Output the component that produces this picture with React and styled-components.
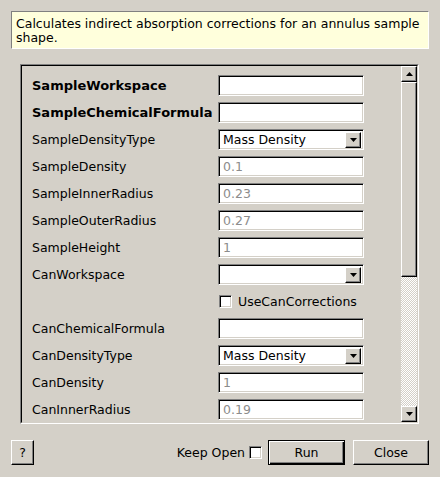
import React from "react";
import styled, { createGlobalStyle, css } from "styled-components";

const Global = createGlobalStyle`
  html, body { margin: 0; padding: 0; }
  body {
    background: #d4d0c8;
    font-family: "DejaVu Sans", "Liberation Sans", sans-serif;
    font-size: 12.5px;
    color: #000;
  }
`;

const Dialog = styled.div`
  width: 440px;
  height: 477px;
  box-sizing: border-box;
  padding: 11px 11px 0 11px;
  display: flex;
  flex-direction: column;
  overflow: hidden;
`;

const Description = styled.div`
  box-sizing: border-box;
  height: 38px;
  background: #ffffdc;
  border: 1px solid;
  border-color: #808080 #ffffff #ffffff #808080;
  padding: 5px 3px 0 4px;
  line-height: 14px;
`;

const Frame = styled.div`
  margin: 15px 10px 0 9px;
  height: 360px;
  box-sizing: border-box;
  border: 1px solid;
  border-color: #808080 #ffffff #ffffff #808080;
  display: flex;
`;

const FrameInner = styled.div`
  flex: 1;
  display: flex;
  border: 1px solid;
  border-color: #000 #d4d0c8 #d4d0c8 #000;
  min-height: 0;
`;

const Content = styled.div`
  flex: 1;
  overflow: hidden;
  padding: 6px 0 0 10px;
`;

const Row = styled.div`
  height: 27px;
  display: grid;
  grid-template-columns: 186px 146px;
  align-items: center;
`;

const Label = styled.div`
  font-weight: ${(p) => (p.$bold ? "bold" : "normal")};
  font-size: ${(p) => (p.$bold ? "13px" : "12.5px")};
  white-space: nowrap;
`;

const sunken = css`
  box-sizing: border-box;
  border: 1px solid;
  border-color: #808080 #ffffff #ffffff #808080;
  box-shadow: inset 1px 1px 0 #000, inset -1px -1px 0 #d4d0c8;
  background: #fff;
`;

const Field = styled.div`
  ${sunken}
  height: 21px;
  padding: 0 4px;
  display: flex;
  align-items: center;
  color: ${(p) => (p.$dim ? "#8c8c8c" : "#000")};
`;

const ComboBox = styled.div`
  ${sunken}
  height: 21px;
  display: flex;
  align-items: center;
  padding: 2px 2px 2px 4px;
`;

const ComboText = styled.div`
  flex: 1;
`;

const raised = css`
  box-sizing: border-box;
  background: #d4d0c8;
  border: 1px solid;
  border-color: #ffffff #000 #000 #ffffff;
  box-shadow: inset -1px -1px 0 #808080;
`;

const ArrowButton = styled.div`
  ${raised}
  width: 16px;
  height: 16px;
  display: flex;
  align-items: center;
  justify-content: center;
  flex: none;
`;

const Arrow = ({ up }) => (
  <svg width="7" height="4" viewBox="0 0 7 4">
    <path d={up ? "M3.5 0 L7 4 L0 4 Z" : "M0 0 L7 0 L3.5 4 Z"} fill="#000" />
  </svg>
);

const CheckRow = styled.div`
  height: 27px;
  display: flex;
  align-items: center;
  padding-left: 187px;
  gap: 6px;
`;

const CheckBox = styled.div`
  ${sunken}
  width: 13px;
  height: 13px;
  flex: none;
`;

const ScrollBar = styled.div`
  width: 16px;
  display: flex;
  flex-direction: column;
`;

const Thumb = styled.div`
  ${raised}
  height: 195px;
  flex: none;
`;

const Trough = styled.div`
  flex: 1;
  background-color: #ffffff;
  background-image: conic-gradient(#d4d0c8 25%, transparent 25% 50%, #d4d0c8 50% 75%, transparent 75%);
  background-size: 2px 2px;
`;

const Footer = styled.div`
  display: flex;
  align-items: center;
  margin-top: 16px;
  height: 25px;
`;

const Button = styled.div`
  ${raised}
  height: 25px;
  width: ${(p) => p.$w}px;
  display: flex;
  align-items: center;
  justify-content: center;
  ${(p) =>
    p.$default &&
    css`
      border: 1px solid #000;
      box-shadow: inset 1px 1px 0 #fff, inset -1px -1px 0 #000, inset -2px -2px 0 #808080;
    `}
`;

const Spacer = styled.div`
  flex: 1;
`;

const KeepOpen = styled.div`
  display: flex;
  align-items: center;
  gap: 4px;
  margin-right: 6px;
`;

const Gap = styled.div`
  width: ${(p) => p.$w}px;
`;

const rows = [
  { label: "SampleWorkspace", bold: true, kind: "field" },
  { label: "SampleChemicalFormula", bold: true, kind: "field" },
  { label: "SampleDensityType", kind: "combo", value: "Mass Density" },
  { label: "SampleDensity", kind: "field", value: "0.1", dim: true },
  { label: "SampleInnerRadius", kind: "field", value: "0.23", dim: true },
  { label: "SampleOuterRadius", kind: "field", value: "0.27", dim: true },
  { label: "SampleHeight", kind: "field", value: "1", dim: true },
  { label: "CanWorkspace", kind: "combo", value: "" },
  { kind: "check", label: "UseCanCorrections" },
  { label: "CanChemicalFormula", kind: "field" },
  { label: "CanDensityType", kind: "combo", value: "Mass Density" },
  { label: "CanDensity", kind: "field", value: "1", dim: true },
  { label: "CanInnerRadius", kind: "field", value: "0.19", dim: true },
];

export default function App() {
  return (
    <>
      <Global />
      <Dialog>
        <Description>
          Calculates indirect absorption corrections for an annulus sample shape.
        </Description>
        <Frame>
          <FrameInner>
            <Content>
              {rows.map((r, i) =>
                r.kind === "check" ? (
                  <CheckRow key={i}>
                    <CheckBox />
                    <span>{r.label}</span>
                  </CheckRow>
                ) : (
                  <Row key={i}>
                    <Label $bold={r.bold}>{r.label}</Label>
                    {r.kind === "combo" ? (
                      <ComboBox>
                        <ComboText>{r.value}</ComboText>
                        <ArrowButton>
                          <Arrow />
                        </ArrowButton>
                      </ComboBox>
                    ) : (
                      <Field $dim={r.dim}>{r.value}</Field>
                    )}
                  </Row>
                )
              )}
            </Content>
            <ScrollBar>
              <ArrowButton>
                <Arrow up />
              </ArrowButton>
              <Thumb />
              <Trough />
              <ArrowButton>
                <Arrow />
              </ArrowButton>
            </ScrollBar>
          </FrameInner>
        </Frame>
        <Footer>
          <Button $w={23}>?</Button>
          <Spacer />
          <KeepOpen>
            <span>Keep Open</span>
            <CheckBox />
          </KeepOpen>
          <Button $w={77} $default>
            Run
          </Button>
          <Gap $w={8} />
          <Button $w={76}>Close</Button>
        </Footer>
      </Dialog>
    </>
  );
}
